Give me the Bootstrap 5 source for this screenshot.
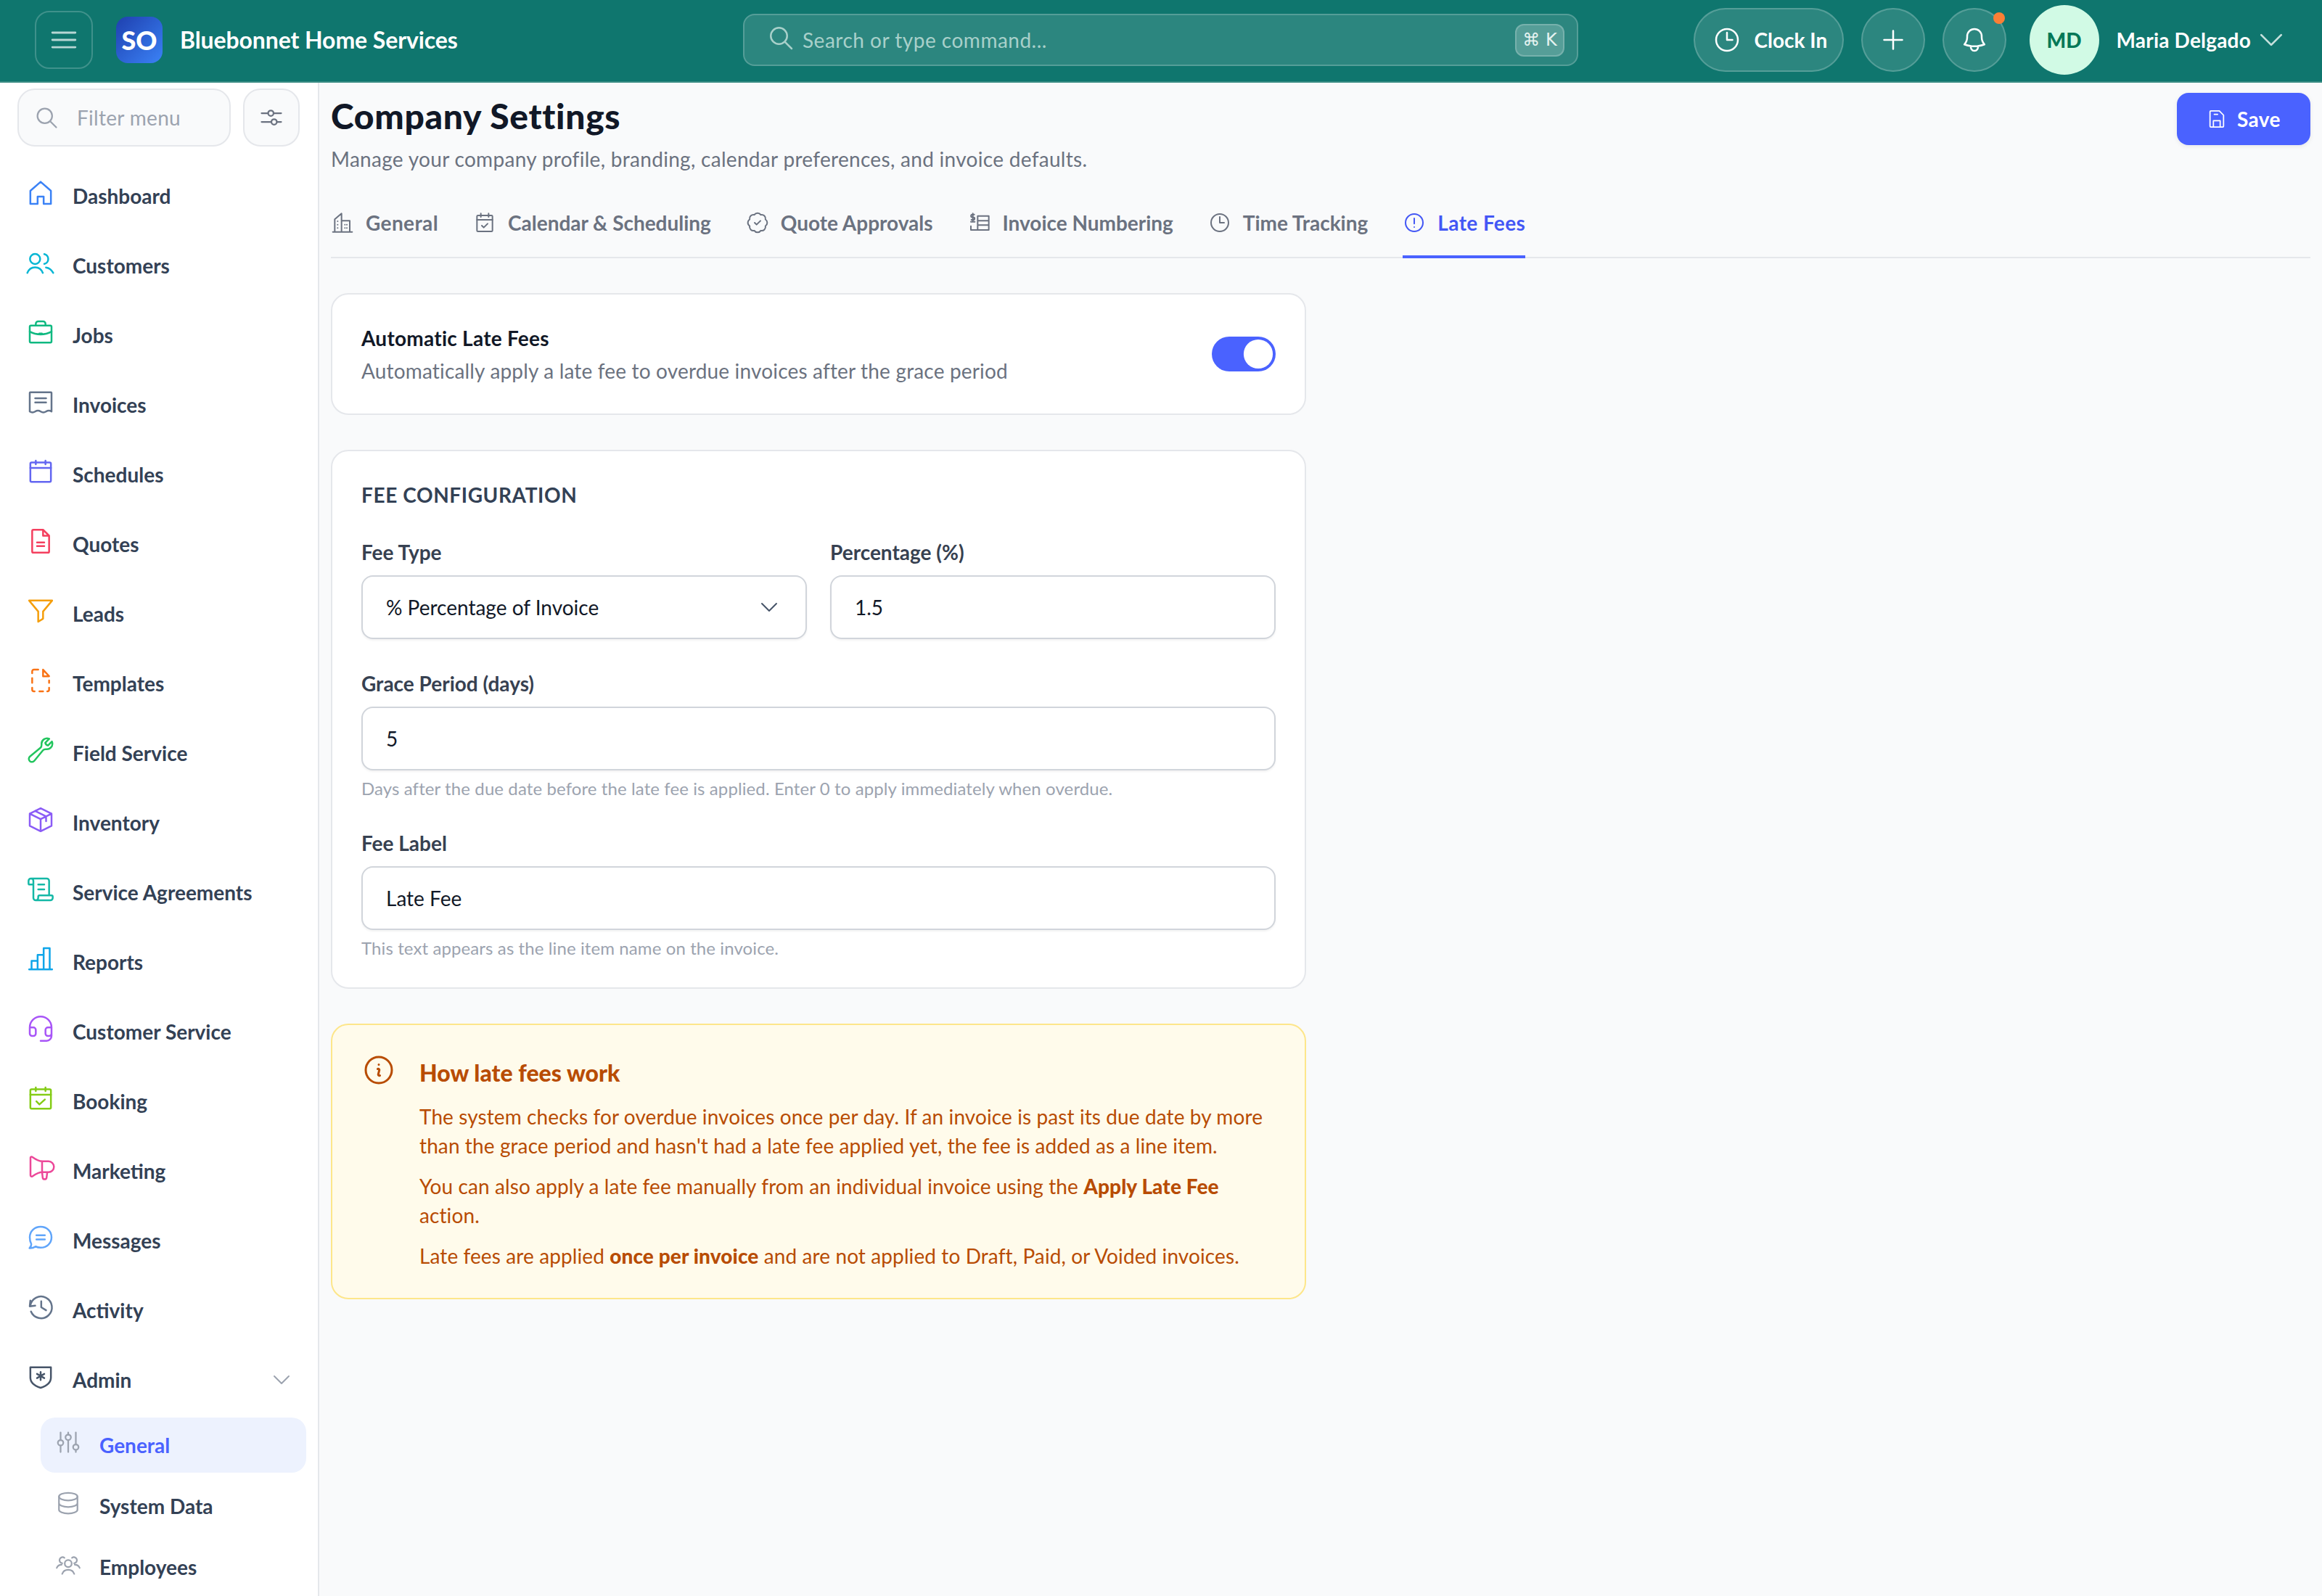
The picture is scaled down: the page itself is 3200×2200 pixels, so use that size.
<!DOCTYPE html>
<html lang="en">
<head>
  <meta charset="UTF-8" />
  <meta name="viewport" content="width=device-width, initial-scale=1.0" />
  <title>Company Settings</title>
  <link href="https://cdn.jsdelivr.net/npm/bootstrap@5.3.0/dist/css/bootstrap.min.css" rel="stylesheet">
  <style>
    html, body { height: 2200px; overflow: hidden; }
    body { font-family: "Lato", "Liberation Sans", sans-serif; font-size: 28px; background: #f9fafb; color: #111827; }
    svg { fill: none; stroke: currentColor; stroke-width: 1.5; stroke-linecap: round; stroke-linejoin: round; flex: none; }

    .top-bar { height: 114px; padding: 0 48px; background: #0f766e; border-bottom: 2px solid #3a8c84; flex-wrap: nowrap; justify-content: flex-start; color: #fff; }
    .top-left { width: 976px; margin-top: -2px; }
    .ham-btn { width: 80px; height: 80px; border: 2px solid rgba(255,255,255,.2); border-radius: 20px; color: rgba(255,255,255,.7); }
    .ham-btn svg { width: 46px; height: 46px; }
    .logo-box { width: 64px; height: 64px; margin-left: 32px; border-radius: 16px; background: linear-gradient(135deg, #1e40af, #3b82f6); font-size: 36px; font-weight: 900; }
    .brand-name { margin-left: 24px; font-size: 32px; font-weight: 700; letter-spacing: -.1px; }
    .search-box { width: 1151px; height: 72px; margin-top: -2px; padding: 0 17px 0 30px; background: rgba(255,255,255,.12); border: 2px solid rgba(255,255,255,.2); border-radius: 16px; color: #a8d0ca; }
    .search-box svg { width: 40px; height: 40px; margin-bottom: 6px; }
    .search-txt { margin-left: 10px; letter-spacing: .5px; }
    .key-hint { width: 68px; height: 45px; background: rgba(255,255,255,.2); border: 2px solid rgba(255,255,255,.2); border-radius: 12px; color: #e6f3f1; font-size: 24px; font-family: "DejaVu Sans", sans-serif; }
    .round-btn { height: 88px; background: rgba(255,255,255,.12); border: 2px solid rgba(255,255,255,.2); border-radius: 44px; color: #fff; }
    .round-btn svg { width: 40px; height: 40px; }
    .clock-btn { width: 207px; padding-left: 24px; gap: 18px; font-weight: 700; }
    .icon-btn { width: 88px; }
    .top-right { margin-top: -2px; }
    .notif-dot { position: absolute; top: 4px; right: 0; width: 16px; height: 16px; border-radius: 50%; background: #fb7f35; }
    .ava-circle { width: 96px; height: 96px; margin-left: 8px; border-radius: 50%; background: #d1fae5; color: #047857; font-weight: 900; }
    .user-name { font-weight: 700; letter-spacing: .2px; }
    .user-chev { width: 44px; height: 44px; margin-left: 6px; color: #c5e0dc; }

    .side-bar { width: 440px; height: 2086px; background: #fff; border-right: 2px solid #e5e7eb; overflow: hidden; }
    .filter-row { padding: 8px 0 0 24px; gap: 17px; }
    .filter-box { width: 294px; height: 80px; padding-left: 20px; gap: 24px; background: #f9fafb; border: 2px solid #e5e7eb; border-radius: 24px; color: #9ca3af; letter-spacing: .3px; }
    .filter-box svg { width: 36px; height: 36px; }
    .filter-btn { width: 78px; height: 80px; background: #f9fafb; border: 2px solid #e5e7eb; border-radius: 24px; color: #6b7280; }
    .filter-btn svg { width: 36px; height: 36px; }
    .side-nav { margin-top: 20px; }
    .side-link { height: 96px; padding: 0 0 0 36px; gap: 24px; color: #334155; font-weight: 700; }
    .side-link svg { width: 40px; height: 40px; margin-bottom: 8px; }
    .side-link .adm-chev { width: 32px; height: 32px; margin: 0 34px 0 auto; color: #9ca3af; }
    .sub-nav { margin: 4px 16px 0 56px; gap: 8px; }
    .sub-link { height: 76px; padding: 0 0 0 20px; gap: 25px; border-radius: 20px; color: #334155; font-weight: 700; }
    .sub-link svg { width: 36px; height: 36px; margin-bottom: 8px; color: #9ca3af; }
    .sub-link.on { background: #edf2fe; color: #4a62ff; }

    .ic-a { color: #3b82f6; } .ic-b { color: #06b6d4; } .ic-c { color: #10b981; } .ic-d { color: #64748b; }
    .ic-e { color: #6366f1; } .ic-f { color: #f43f5e; } .ic-g { color: #f59e0b; } .ic-h { color: #f97316; }
    .ic-i { color: #22c55e; } .ic-j { color: #8b5cf6; } .ic-k { color: #14b8a6; } .ic-l { color: #0ea5e9; }
    .ic-m { color: #a855f7; } .ic-n { color: #84cc16; } .ic-o { color: #ec4899; } .ic-p { color: #60a5fa; }
    .ic-q { color: #475569; }

    .main-area { padding: 14px 16px 0; background: #f9fafb; }
    .page-title { margin: 2px 0 9px; font-size: 48px; line-height: 60px; font-weight: 900; color: #111827; letter-spacing: .7px; }
    .page-sub { margin: 0; line-height: 40px; color: #6b7280; letter-spacing: .3px; }
    .save-btn { width: 184px; height: 72px; gap: 14px; background: #4a62ff; border: 0; border-radius: 16px; color: #fff; font-size: 28px; font-weight: 700; letter-spacing: .4px; box-shadow: 0 2px 6px rgba(0,0,0,.08); }
    .save-btn svg { width: 28px; height: 28px; }
    .set-tabs { margin-top: 25px; gap: 48px; border-bottom: 2px solid #e5e7eb; }
    .set-tabs .nav-link { height: 92px; margin-bottom: -2px; padding: 0 0 2px; gap: 16px; color: #6b7280; font-weight: 700; letter-spacing: -.02px; border-bottom: 4px solid transparent; }
    .set-tabs .nav-item:first-child .nav-link { letter-spacing: .4px; }
    .set-tabs .nav-link svg { width: 32px; height: 32px; }
    .set-tabs .nav-link.active { color: #4357f5; border-bottom-color: #4a62ff; background: none; letter-spacing: .4px; }
    .set-col { width: 1344px; margin-top: 48px; gap: 48px; }
    .set-card { border: 2px solid #e5e7eb; border-radius: 24px; background: #fff; }
    .toggle-card { height: 168px; padding: 0 40px; }
    .toggle-card h6 { margin: 0 0 5px; font-size: 28px; line-height: 40px; font-weight: 700; color: #111827; letter-spacing: .25px; }
    .toggle-card p { margin: 0; line-height: 40px; color: #6b7280; letter-spacing: .17px; }
    .fee-switch { margin: 0; padding: 0; min-height: 0; }
    .fee-switch .form-check-input { float: none; width: 88px; height: 48px; margin: 0; background-color: #4a62ff; border: 0;
      background-position: right center; background-size: 48px 48px; border-radius: 24px;
      background-image: url("data:image/svg+xml,%3csvg xmlns='http://www.w3.org/2000/svg' viewBox='-4 -4 8 8'%3e%3ccircle r='3.35' fill='%23fff'/%3e%3c/svg%3e"); }
    .fee-card { padding: 38px 40px 37px; }
    .fee-head { margin: 0 0 36px; font-size: 28px; line-height: 44px; font-weight: 700; color: #334155; text-transform: uppercase; letter-spacing: .6px; }
    .fee-row { --bs-gutter-x: 32px; --bs-gutter-y: 0; }
    .fee-label { margin: 0 0 12px; line-height: 40px; font-weight: 700; color: #374151; }
    .fee-input { height: 88px; padding: 0 32px; font-size: 28px; color: #111827; border: 2px solid #d1d5db; border-radius: 16px; box-shadow: 0 2px 3px rgba(0,0,0,.05); }
    select.fee-input { padding-right: 80px; background-position: right 34px center; background-size: 32px 32px;
      background-image: url("data:image/svg+xml,%3csvg xmlns='http://www.w3.org/2000/svg' viewBox='0 0 24 24' fill='none' stroke='%23475569' stroke-width='1.5' stroke-linecap='round' stroke-linejoin='round'%3e%3cpath d='m19.5 8.25-7.5 7.5-7.5-7.5'/%3e%3c/svg%3e"); }
    .fee-group { margin-top: 40px; }
    .fee-help { margin: 8px 0 37px; font-size: 24px; line-height: 34px; color: #9ca3af; letter-spacing: .1px; }
    .fee-help.end { margin-bottom: 0; }
    .how-card { padding: 38px 40px; gap: 32px; background: #fffbeb; border: 2px solid #fde68a; border-radius: 24px; color: #b84c03; }
    .how-card > svg { width: 48px; height: 48px; }
    .how-card h5 { margin: 6px 0 18px; font-size: 32px; line-height: 44px; font-weight: 900; }
    .how-card p { margin: 0 0 16px; line-height: 40px; letter-spacing: .1px; }
    .how-card p:last-child { margin-bottom: 0; }
    .how-card strong { font-weight: 900; }
  </style>
</head>
<body>
  <nav class="navbar top-bar">
    <div class="top-left d-flex align-items-center">
      <div class="ham-btn d-flex align-items-center justify-content-center">
        <svg viewBox="0 0 24 24"><path d="M3.75 6.75h16.5M3.75 12h16.5m-16.5 5.25h16.5"/></svg>
      </div>
      <div class="logo-box d-flex align-items-center justify-content-center">SO</div>
      <span class="brand-name">Bluebonnet Home Services</span>
    </div>
    <div class="search-box d-flex align-items-center">
      <svg viewBox="0 0 24 24"><path d="m21 21-5.2-5.2M17.25 10.5a6.75 6.75 0 1 1-13.5 0 6.75 6.75 0 0 1 13.5 0Z"/></svg>
      <span class="search-txt">Search or type command...</span>
      <span class="key-hint ms-auto d-flex align-items-center justify-content-center">⌘ K</span>
    </div>
    <div class="top-right ms-auto d-flex align-items-center gap-4">
      <div class="round-btn clock-btn d-flex align-items-center">
        <svg viewBox="0 0 24 24"><circle cx="12" cy="12" r="9"/><path d="M12 6v6h4.5"/></svg>
        <span>Clock In</span>
      </div>
      <div class="round-btn icon-btn d-flex align-items-center justify-content-center">
        <svg viewBox="0 0 24 24"><path d="M12 4.5v15m7.5-7.5h-15"/></svg>
      </div>
      <div class="round-btn icon-btn d-flex align-items-center justify-content-center position-relative">
        <svg viewBox="0 0 24 24"><path d="M14.857 17.082a23.848 23.848 0 0 0 5.454-1.31A8.967 8.967 0 0 1 18 9.75V9A6 6 0 0 0 6 9v.75a8.967 8.967 0 0 1-2.312 6.022c1.733.64 3.56 1.085 5.455 1.31m5.714 0a24.255 24.255 0 0 1-5.714 0m5.714 0a3 3 0 1 1-5.714 0"/></svg>
        <span class="notif-dot"></span>
      </div>
      <div class="ava-circle d-flex align-items-center justify-content-center">MD</div>
      <div class="d-flex align-items-center">
        <span class="user-name">Maria Delgado</span>
        <svg class="user-chev" viewBox="0 0 24 24"><path d="m19.5 8.25-7.5 7.5-7.5-7.5"/></svg>
      </div>
    </div>
  </nav>

  <div class="d-flex">
    <aside class="side-bar flex-shrink-0">
      <div class="filter-row d-flex">
        <div class="filter-box d-flex align-items-center">
          <svg viewBox="0 0 24 24"><path d="m21 21-5.2-5.2M17.25 10.5a6.75 6.75 0 1 1-13.5 0 6.75 6.75 0 0 1 13.5 0Z"/></svg>
          <span>Filter menu</span>
        </div>
        <div class="filter-btn d-flex align-items-center justify-content-center">
          <svg viewBox="0 0 24 24"><path d="M3 8h6M14 8h7M3 16h9M17 16h4"/><circle cx="11.5" cy="8" r="2.5"/><circle cx="14.5" cy="16" r="2.5"/></svg>
        </div>
      </div>
      <div class="side-nav nav flex-column">
        <a class="side-link nav-link d-flex align-items-center" href="#"><svg class="ic-a" viewBox="0 0 24 24"><path d="M3.5 21V10.2L12 2.8l8.5 7.4V21h-6v-6h-5v6Z"/></svg>Dashboard</a>
        <a class="side-link nav-link d-flex align-items-center" href="#"><svg class="ic-b" viewBox="0 0 24 24"><circle cx="7.4" cy="9" r="4.2"/><path d="M1 20.5c1.2-3 3.5-4.6 6.4-4.6s5.2 1.6 6.4 4.6M15 4.9a4.2 4.2 0 0 1 0 8.2M16.4 16c2.5.3 4.6 1.9 6 4.5"/></svg>Customers</a>
        <a class="side-link nav-link d-flex align-items-center" href="#"><svg class="ic-c" viewBox="0 0 24 24"><rect x="3" y="6.5" width="18" height="14" rx="1"/><path d="M8 6.5V5a2 2 0 0 1 2-2h4a2 2 0 0 1 2 2v1.5M3 11.5c5.5 3 12.500 3 18 0M11 13h2"/></svg>Jobs</a>
        <a class="side-link nav-link d-flex align-items-center" href="#"><svg class="ic-d" viewBox="0 0 24 24"><path d="M3 20V4.500a.5.5 0 0 1 .5-.5h17a.5.5 0 0 1 .5.5V20c-1.500-1-3-1-4.500 0-1.500 1-3 1-4.500 0-1.500-1-3-1-4.500 0-1.500 1-3 1-4.500 0ZM7.500 9h9M7.500 12.500h9"/></svg>Invoices</a>
        <a class="side-link nav-link d-flex align-items-center" href="#"><svg class="ic-e" viewBox="0 0 24 24"><rect x="3.500" y="4.500" width="17" height="16" rx="1"/><path d="M3.500 9h17M8 3v3M16 3v3"/></svg>Schedules</a>
        <a class="side-link nav-link d-flex align-items-center" href="#"><svg class="ic-f" viewBox="0 0 24 24"><path d="M5 3.500a1 1 0 0 1 1-1h8l5 5V20.500a1 1 0 0 1-1 1H6a1 1 0 0 1-1-1ZM14 2.500V7.500h5M9 13h6M9 16h6"/></svg>Quotes</a>
        <a class="side-link nav-link d-flex align-items-center" href="#"><svg class="ic-g" viewBox="0 0 24 24"><path d="M2.500 3.500h19L14 12.500v6L10 21v-8.500Z"/></svg>Leads</a>
        <a class="side-link nav-link d-flex align-items-center" href="#"><svg class="ic-h" viewBox="0 0 24 24"><path d="M14 3l5 5.500h-5ZM10 3H6.500A1.500 1.500 0 0 0 5 4.500V6M5 10v4M5 18v1.500A1.500 1.500 0 0 0 6.500 21H7M11 21h3M17.500 21a1.500 1.500 0 0 0 1.500-1.500V18M19 14v-2"/></svg>Templates</a>
        <a class="side-link nav-link d-flex align-items-center" href="#"><svg class="ic-i" viewBox="0 0 24 24"><path d="M21.750 6.750a4.500 4.500 0 0 1-4.884 4.484c-1.076-.091-2.264.071-2.950.904l-7.152 8.684a2.548 2.548 0 1 1-3.586-3.586l8.684-7.152c.833-.686.995-1.874.904-2.950a4.500 4.500 0 0 1 6.336-4.486l-3.276 3.276a3.004 3.004 0 0 0 2.250 2.250l3.276-3.276c.277.626.400 1.288.398 1.852Z"/></svg>Field Service</a>
        <a class="side-link nav-link d-flex align-items-center" href="#"><svg class="ic-j" viewBox="0 0 24 24"><path d="M12 2.500l9 4.500v10l-9 4.500-9-4.500V7ZM3 7l9 4.500L21 7M12 11.500v10M7.500 4.750l9 4.500v4"/></svg>Inventory</a>
        <a class="side-link nav-link d-flex align-items-center" href="#"><svg class="ic-k" viewBox="0 0 24 24"><path d="M15 12h-5M15 8h-5M19 17V5a2 2 0 0 0-2-2H4M8 21h12a2 2 0 0 0 2-2v-1a1 1 0 0 0-1-1H11a1 1 0 0 0-1 1v1a2 2 0 1 1-4 0V5a2 2 0 1 0-4 0v2a1 1 0 0 0 1 1h3"/></svg>Service Agreements</a>
        <a class="side-link nav-link d-flex align-items-center" href="#"><svg class="ic-l" viewBox="0 0 24 24"><path d="M2.500 20.500h19M4.500 20.500V13.500h5v7M9.500 20.500V8.500h5v12M14.500 20.500V3h5v17.500"/></svg>Reports</a>
        <a class="side-link nav-link d-flex align-items-center" href="#"><svg class="ic-m" viewBox="0 0 24 24"><path d="M3 11h3a2 2 0 0 1 2 2v3a2 2 0 0 1-2 2H5a2 2 0 0 1-2-2v-5Zm0 0a9 9 0 1 1 18 0m0 0v5a2 2 0 0 1-2 2h-1a2 2 0 0 1-2-2v-3a2 2 0 0 1 2-2h3ZM21 16v2a4 4 0 0 1-4 4h-5"/></svg>Customer Service</a>
        <a class="side-link nav-link d-flex align-items-center" href="#"><svg class="ic-n" viewBox="0 0 24 24"><rect x="3.500" y="4.500" width="17" height="16" rx="1"/><path d="M3.500 9h17M8 3v3M16 3v3M8.500 14.500l2.500 2.500 4.500-4"/></svg>Booking</a>
        <a class="side-link nav-link d-flex align-items-center" href="#"><svg class="ic-o" viewBox="0 0 24 24"><path d="M3.600 3.500V18c0 1 1 1.300 1.600.9C8 17 11 15.500 13.500 15.500h5a4.500 4.500 0 0 0 0-9h-5C11 6.500 8 5 5.200 3c-.7-.5-1.600-.2-1.600.5ZM13.200 6.500v9M13.200 15.500l.5 4.500c.2 1.800 3 1.800 3.200 0l.6-4.500"/></svg>Marketing</a>
        <a class="side-link nav-link d-flex align-items-center" href="#"><svg class="ic-p" viewBox="0 0 24 24"><path d="M12 3c5 0 9 3.700 9 8.700s-4 8.600-9 8.600c-1.500 0-3-.3-4.200-1-1.400 1-3.200 1.500-5 1.400 1-.9 1.500-2 1.500-3.300C3.500 16 3 13.900 3 11.700 3 6.700 7 3 12 3ZM8.500 10h7M8.500 13.500h7"/></svg>Messages</a>
        <a class="side-link nav-link d-flex align-items-center" href="#"><svg class="ic-d" viewBox="0 0 24 24"><path d="M3.500 6.500 3 11.200l4.500-.5M3.400 11A9 9 0 1 1 4 15.500M12.500 7v5l4 2.500"/></svg>Activity</a>
        <a class="side-link nav-link d-flex align-items-center" href="#"><svg class="ic-q" viewBox="0 0 24 24"><path d="M3.500 4h17v8.500c0 4-3.500 7-8.500 8.500-5-1.500-8.500-4.500-8.500-8.500ZM12 8v6.500M9 9.500l6 3.500M15 9.500l-6 3.500"/></svg>Admin<svg class="adm-chev" viewBox="0 0 24 24"><path d="m19.500 8.250-7.500 7.500-7.500-7.500"/></svg></a>
      </div>
      <div class="sub-nav nav flex-column">
        <a class="sub-link on nav-link d-flex align-items-center" href="#"><svg viewBox="0 0 24 24"><path d="M5 3v7M5 15v6M12 3v2M12 10v11M19 3v11M19 19v2"/><circle cx="5" cy="12.500" r="2.500"/><circle cx="12" cy="7.500" r="2.500"/><circle cx="19" cy="16.500" r="2.500"/></svg>General</a>
        <a class="sub-link nav-link d-flex align-items-center" href="#"><svg viewBox="0 0 24 24"><ellipse cx="12" cy="6" rx="8.500" ry="3.500"/><path d="M3.500 6v12c0 2 3.800 3.500 8.500 3.500s8.500-1.500 8.500-3.500V6M3.500 12c0 2 3.800 3.500 8.500 3.500s8.500-1.500 8.500-3.500"/></svg>System Data</a>
        <a class="sub-link nav-link d-flex align-items-center" href="#"><svg viewBox="0 0 24 24"><circle cx="12" cy="11.500" r="3.200"/><path d="M6.500 21c.8-2.500 3-3.800 5.500-3.800s4.700 1.300 5.500 3.800M6.500 11.200a2.800 2.800 0 1 1 2-5M15.500 6.200a2.800 2.800 0 1 1 2 5M1.500 15.500c.7-2 2.300-3 4.500-3M18 12.500c2.200 0 3.800 1 4.500 3"/></svg>Employees</a>
      </div>
    </aside>

    <main class="main-area flex-grow-1">
      <div class="d-flex justify-content-between align-items-start">
        <div>
          <h1 class="page-title">Company Settings</h1>
          <p class="page-sub">Manage your company profile, branding, calendar preferences, and invoice defaults.</p>
        </div>
        <button class="save-btn btn d-flex align-items-center justify-content-center" type="button">
          <svg viewBox="0 0 24 24"><path d="M4 3.500a1 1 0 0 1 1-1h10l5 5v13a1 1 0 0 1-1 1H5a1 1 0 0 1-1-1ZM8 21.500V14h8v7.500M9 6.500h4"/></svg>
          Save
        </button>
      </div>

      <ul class="set-tabs nav">
        <li class="nav-item"><a class="nav-link d-flex align-items-center" href="#"><svg viewBox="0 0 24 24"><path d="M2 21.500h20M4 21.500V8.500l7-6v19M11 10h8.500v11.500M7 10.500v.01M7 14v.01M7 17.500v.01M14.500 14v.01M14.500 17.500v.01M16.500 14v.01M16.500 17.500v.01"/></svg>General</a></li>
        <li class="nav-item"><a class="nav-link d-flex align-items-center" href="#"><svg viewBox="0 0 24 24"><rect x="4" y="4.500" width="16" height="16.500" rx="1"/><path d="M4 9h16M8 2.500v3.500M16 2.500v3.500M9 15l2 2 4-4"/></svg>Calendar &amp; Scheduling</a></li>
        <li class="nav-item"><a class="nav-link d-flex align-items-center" href="#"><svg viewBox="0 0 24 24"><path d="M3.850 8.620a4 4 0 0 1 4.780-4.770 4 4 0 0 1 6.740 0 4 4 0 0 1 4.780 4.780 4 4 0 0 1 0 6.740 4 4 0 0 1-4.770 4.780 4 4 0 0 1-6.750 0 4 4 0 0 1-4.780-4.770 4 4 0 0 1 0-6.760ZM9 12l2 2 4-4"/></svg>Quote Approvals</a></li>
        <li class="nav-item"><a class="nav-link d-flex align-items-center" href="#"><svg viewBox="0 0 24 24"><path d="M10 5h11.500v14.500H3v-4M10 5v14.500M10 10h11.500M10 14.500h11.500M3 11h4M6.500 3.500h-2a1.300 1.300 0 0 0 0 2.800h1a1.300 1.300 0 0 1 0 2.700H3.500M5 2.500V10"/></svg>Invoice Numbering</a></li>
        <li class="nav-item"><a class="nav-link d-flex align-items-center" href="#"><svg viewBox="0 0 24 24"><circle cx="12" cy="12" r="9"/><path d="M12 6v6h4.500"/></svg>Time Tracking</a></li>
        <li class="nav-item"><a class="nav-link active d-flex align-items-center" href="#"><svg viewBox="0 0 24 24"><circle cx="12" cy="12" r="9"/><path d="M12 7.500v5.500M12 16.500v.01"/></svg>Late Fees</a></li>
      </ul>

      <div class="set-col d-flex flex-column">
        <div class="set-card toggle-card d-flex align-items-center justify-content-between">
          <div>
            <h6>Automatic Late Fees</h6>
            <p>Automatically apply a late fee to overdue invoices after the grace period</p>
          </div>
          <div class="form-check form-switch fee-switch">
            <input class="form-check-input" type="checkbox" role="switch" checked aria-label="Automatic Late Fees">
          </div>
        </div>

        <div class="set-card fee-card">
          <h6 class="fee-head">Fee Configuration</h6>
          <div class="row fee-row">
            <div class="col-6">
              <label class="form-label fee-label">Fee Type</label>
              <select class="form-select fee-input"><option>% Percentage of Invoice</option></select>
            </div>
            <div class="col-6">
              <label class="form-label fee-label">Percentage (%)</label>
              <input class="form-control fee-input" type="text" value="1.5">
            </div>
          </div>
          <div class="fee-group">
            <label class="form-label fee-label">Grace Period (days)</label>
            <input class="form-control fee-input" type="text" value="5">
            <div class="fee-help">Days after the due date before the late fee is applied. Enter 0 to apply immediately when overdue.</div>
          </div>
          <div>
            <label class="form-label fee-label">Fee Label</label>
            <input class="form-control fee-input" type="text" value="Late Fee">
            <div class="fee-help end">This text appears as the line item name on the invoice.</div>
          </div>
        </div>

        <div class="how-card d-flex">
          <svg viewBox="0 0 24 24"><path d="m11.250 11.250.041-.020a.750.750 0 0 1 1.063.852l-.708 2.836a.750.750 0 0 0 1.063.853l.041-.021M21 12a9 9 0 1 1-18 0 9 9 0 0 1 18 0ZM12 8.250h.008v.008H12V8.250Z"/></svg>
          <div>
            <h5>How late fees work</h5>
            <p>The system checks for overdue invoices once per day. If an invoice is past its due date by more than the grace period and hasn't had a late fee applied yet, the fee is added as a line item.</p>
            <p>You can also apply a late fee manually from an individual invoice using the <strong>Apply Late Fee</strong> action.</p>
            <p>Late fees are applied <strong>once per invoice</strong> and are not applied to Draft, Paid, or Voided invoices.</p>
          </div>
        </div>
      </div>
    </main>
  </div>
</body>
</html>
